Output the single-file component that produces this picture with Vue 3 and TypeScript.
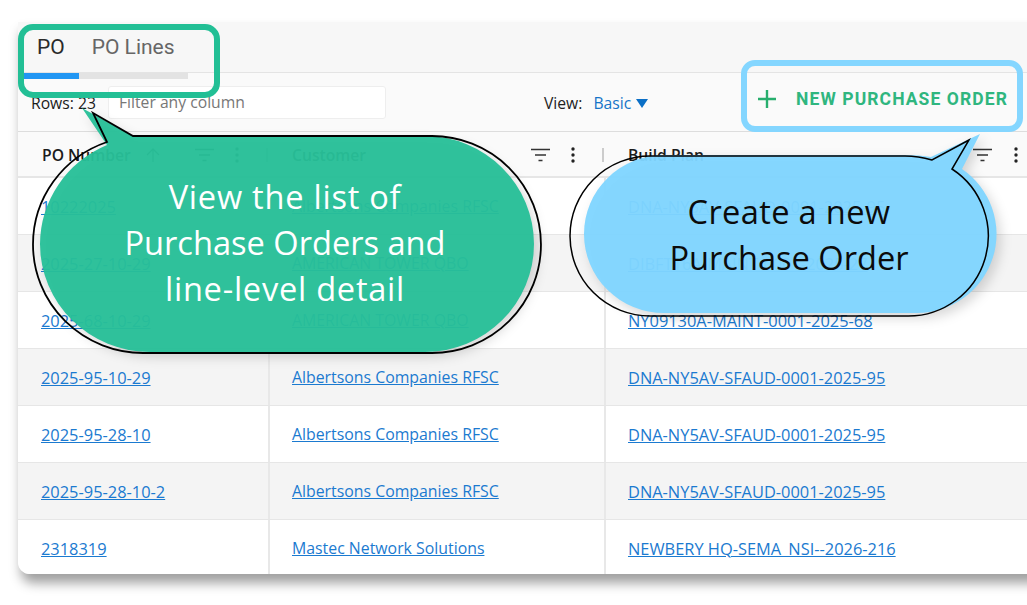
<script setup lang="ts">
interface Row { po: string; customer: string; plan: string }
const rows: Row[] = [
  { po: '10222025', customer: 'Albertsons Companies RFSC', plan: 'DNA-NY5AV-SFAUD-0001-2025-95' },
  { po: '2025-27-10-29', customer: 'AMERICAN TOWER QBO', plan: 'DIBFT16A-MAINT-0001-2025-27' },
  { po: '2025-68-10-29', customer: 'AMERICAN TOWER QBO', plan: 'NY09130A-MAINT-0001-2025-68' },
  { po: '2025-95-10-29', customer: 'Albertsons Companies RFSC', plan: 'DNA-NY5AV-SFAUD-0001-2025-95' },
  { po: '2025-95-28-10', customer: 'Albertsons Companies RFSC', plan: 'DNA-NY5AV-SFAUD-0001-2025-95' },
  { po: '2025-95-28-10-2', customer: 'Albertsons Companies RFSC', plan: 'DNA-NY5AV-SFAUD-0001-2025-95' },
  { po: '2318319', customer: 'Mastec Network Solutions', plan: 'NEWBERY HQ-SEMA_NSI--2026-216' },
]
</script>

<template>
  <div class="stage">
    <section class="card">
      <header class="tabs">
        <div class="tab-labels">
          <span class="tab active">PO</span>
          <span class="tab">PO Lines</span>
        </div>
        <div class="tab-track"><div class="tab-thumb"></div></div>
      </header>
      <div class="toolbar">
        <span class="count">Rows: 23</span>
        <div class="filter">Filter any column</div>
        <div class="view">
          <span>View:</span>
          <span class="view-value">Basic</span>
          <svg width="12" height="10" viewBox="0 0 12 10"><path d="M0 1h12L6 10z" fill="#0b6fc6" /></svg>
        </div>
        <button class="new">
          <svg width="20" height="20" viewBox="0 0 20 20"><path d="M10 1v18M1 10h18" stroke="#27ae6d" stroke-width="2.4" /></svg>
          <span>NEW PURCHASE ORDER</span>
        </button>
      </div>
      <div class="grid head">
        <div class="hcell first">
          <span class="htitle">PO Number</span>
          <svg class="arrow" width="16" height="16" viewBox="0 0 16 16"><path d="M8 15V2M2 8l6-6 6 6" fill="none" stroke="#444" stroke-width="1.3" /></svg>
          <svg class="fil" width="20" height="14" viewBox="0 0 20 14"><path d="M0 1.5h19M4 7h11M7.500 12.500h4" stroke="#333" stroke-width="1.500" /></svg>
          <svg class="keb" width="4" height="16" viewBox="0 0 4 16"><circle cx="2" cy="2" r="1.700" /><circle cx="2" cy="8" r="1.700" /><circle cx="2" cy="14" r="1.700" /></svg>
          <i class="sep"></i>
        </div>
        <div class="hcell">
          <span class="htitle">Customer</span>
          <svg class="fil" width="20" height="14" viewBox="0 0 20 14"><path d="M0 1.5h19M4 7h11M7.500 12.500h4" stroke="#333" stroke-width="1.500" /></svg>
          <svg class="keb" width="4" height="16" viewBox="0 0 4 16"><circle cx="2" cy="2" r="1.700" /><circle cx="2" cy="8" r="1.700" /><circle cx="2" cy="14" r="1.700" /></svg>
          <i class="sep"></i>
        </div>
        <div class="hcell">
          <span class="htitle">Build Plan</span>
          <svg class="fil" width="20" height="14" viewBox="0 0 20 14"><path d="M0 1.5h19M4 7h11M7.500 12.500h4" stroke="#333" stroke-width="1.500" /></svg>
          <svg class="keb" width="4" height="16" viewBox="0 0 4 16"><circle cx="2" cy="2" r="1.700" /><circle cx="2" cy="8" r="1.700" /><circle cx="2" cy="14" r="1.700" /></svg>
        </div>
      </div>
      <div v-for="(r, i) in rows" :key="i" class="grid row" :class="{ odd: i % 2 === 1 }">
        <div class="cell first"><a>{{ r.po }}</a></div>
        <div class="cell mid"><a>{{ r.customer }}</a></div>
        <div class="cell"><a>{{ r.plan }}</a></div>
      </div>
    </section>

    <svg class="overlay" width="1027" height="605" viewBox="0 0 1027 605">
      <rect x="21" y="27" width="196" height="68" rx="12" fill="none" stroke="#22bf95" stroke-width="6" />
      <rect x="744" y="63" width="276" height="66" rx="11" fill="none" stroke="#84d6ff" stroke-width="6" />
      <g class="soft">
        <path d="M82 108 L133 136 H425 A109 108 0 0 1 425 352 H150 A110 108 0 0 1 40 244 A110 108 0 0 1 107 145 Z" fill="#28c098" fill-opacity=".96" />
      </g>
      <path d="M93 113 L133 136 H432 A109 108.500 0 0 1 432 353 H143 A110 108.500 0 0 1 33 244.500 A110 108.500 0 0 1 107 142 Z" fill="none" stroke="#000" stroke-width="1.800" />
      <g class="soft">
        <path d="M980 134 L931 157 Q920 155 905 155 H664 A80 79 0 0 0 664 313 H917 A80 79 0 0 0 962 169 Z" fill="#80d5ff" fill-opacity=".96" />
      </g>
      <path d="M969 140 L932 160 Q918 156 905 156 H650 A80 80 0 0 0 650 316 H908 A80 80 0 0 0 952 169 Z" fill="none" stroke="#000" stroke-width="1.500" />
    </svg>
    <div class="bubble green">
      <span class="wide">View the list of</span><br />Purchase Orders and<br /><span class="wide">line-level detail</span>
    </div>
    <div class="bubble blue"><span class="slight">Create a new</span><br />Purchase Order</div>
  </div>
</template>

<style scoped>
.stage {
  position: relative;
  width: 1027px;
  height: 605px;
  overflow: hidden;
  background: #fff;
  padding: 22px 0 0 18px;
  box-sizing: border-box;
  font-family: "Open Sans", "Noto Sans", sans-serif;
  font-size: 15.7px;
  color: #222;
}
.card {
  width: 1040px;
  height: 552px;
  border-radius: 0 0 0 12px;
  background: #f9f9f9;
  box-shadow: 3px 9px 12px rgba(0, 0, 0, .38);
  overflow: hidden;
}
.tabs {
  height: 51px;
  background: #f7f7f7;
  border-bottom: 1px solid #e4e4e4;
  box-sizing: border-box;
  position: relative;
}
.tab-labels {
  display: flex;
  gap: 27px;
  padding: 11px 0 0 19px;
  font-family: Roboto, sans-serif;
  font-size: 21px;
  line-height: 28px;
  color: #666;
}
.tab.active { color: #2a2a2a; }
.tab-track {
  position: absolute;
  left: 6px;
  top: 51px;
  width: 164px;
  height: 6px;
  background: #e3e3e3;
  z-index: 1;
}
.tab-thumb { width: 55px; height: 6px; background: #2196f3; }
.toolbar {
  height: 59px;
  display: flex;
  align-items: center;
  border-bottom: 1px solid #ddd;
  box-sizing: border-box;
  padding-left: 13px;
  background: #fafafa;
}
.count { width: 77px; color: #1a1a1a; padding-top: 1px; }
.filter {
  width: 278px;
  height: 33px;
  background: #fff;
  border: 1px solid #eee;
  border-radius: 3px;
  box-sizing: border-box;
  padding-left: 10px;
  line-height: 30px;
  color: #777;
}
.view {
  margin-left: 158px;
  width: 213px;
  display: flex;
  align-items: center;
  gap: 11px;
  padding-top: 1px;
}
.view svg { margin-left: -6px; }
.view-value { color: #1574c8; }
.new {
  display: flex;
  align-items: center;
  gap: 19px;
  border: 0;
  background: none;
  padding: 0;
  margin-top: -7px;
  font-family: Roboto, sans-serif;
  font-weight: 700;
  font-size: 17.5px;
  letter-spacing: 1.1px;
  color: #2fb67f;
  white-space: nowrap;
}
.grid { display: grid; grid-template-columns: 252px 336px 1fr; }
.head {
  height: 46px;
  border-bottom: 2px solid #e6e6e6;
  box-sizing: border-box;
  background: #fafafa;
}
.hcell {
  position: relative;
  display: flex;
  align-items: center;
  padding: 2px 0 0 22px;
}
.hcell.first { padding-left: 24px; }
.htitle { font-weight: 600; color: #1c1c1c; width: 100px; white-space: nowrap; }
.arrow { position: absolute; left: 127px; top: 15px; }
.fil { position: absolute; left: 261px; top: 16px; }
.hcell.first .fil { left: 177px; }
.keb { position: absolute; left: 301px; top: 15px; fill: #222; }
.hcell.first .keb { left: 217px; }
.hcell:nth-child(3) .fil { left: 367px; }
.hcell:nth-child(3) .keb { left: 408px; }
.sep {
  position: absolute;
  right: 2px;
  top: 16px;
  width: 2px;
  height: 14px;
  background: #ccc;
}
.row {
  height: 57px;
  box-sizing: border-box;
  border-bottom: 1px solid #e6e6e6;
  background: #fff;
}
.row.odd { background: #f4f4f4; }
.cell {
  display: flex;
  align-items: center;
  padding-left: 22px;
  border-right: 2px solid #e8e8e8;
  font-size: 16.4px;
}
.cell.mid { font-size: 15.85px; }
.cell.first { padding-left: 23px; }
.cell a { color: #1b7ad0; text-decoration: underline; }
.overlay { position: absolute; left: 0; top: 0; }
.soft { filter: drop-shadow(4px 5px 6px rgba(0, 0, 0, .16)); }
.bubble {
  position: absolute;
  text-align: center;
  font-size: 32.6px;
  line-height: 46px;
  white-space: nowrap;
  font-family: "Open Sans", "Noto Sans", sans-serif;
}
.wide { letter-spacing: .75px; }
.slight { letter-spacing: .35px; }
.green { left: 40px; width: 490px; top: 174px; color: #fff; }
.blue { left: 584px; width: 410px; top: 189px; color: #0b0b0b; }
</style>

<style>
html, body { margin: 0; background: #fff; }
</style>
